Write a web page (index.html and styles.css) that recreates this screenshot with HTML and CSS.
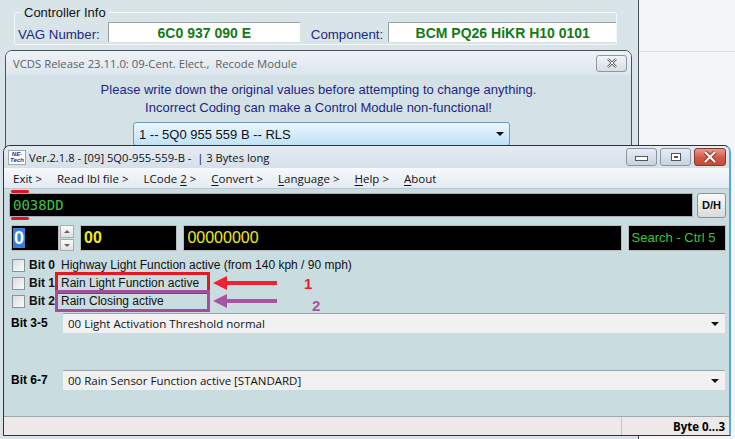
FILE: index.html
```html
<!DOCTYPE html>
<html lang="en">
<head>
    <meta charset="UTF-8">
    <title>VCDS - Recode Module</title>
    <link rel="stylesheet" href="styles.css">
</head>
<body>
    <div class="desk">
        <div class="desk-strip"></div>

        <!-- background VCDS window -->
        <div class="back-win">
            <fieldset class="ctrl-info">
                <legend>Controller Info</legend>
                <div class="ctrl-row">
                    <span class="lbl">VAG Number:</span>
                    <span class="val vag">6C0 937 090 E</span>
                    <span class="lbl comp-lbl">Component:</span>
                    <span class="val comp">BCM PQ26 HiKR H10 0101</span>
                </div>
            </fieldset>
        </div>

        <!-- recode dialog -->
        <div class="dialog">
            <div class="dlg-title">
                <span>VCDS Release 23.11.0: 09-Cent. Elect.,&nbsp; Recode Module</span>
                <span class="dlg-close">
                    <svg width="16" height="10" viewBox="0 0 16 10"><path d="M4 1 L12 9 M12 1 L4 9" stroke="#555" stroke-width="2.4"/><path d="M4 1 L12 9 M12 1 L4 9" stroke="#fff" stroke-width="1"/></svg>
                </span>
            </div>
            <div class="dlg-body">
                <p>Please write down the original values before attempting to change anything.</p>
                <p>Incorrect Coding can make a Control Module non-functional!</p>
                <div class="dlg-select">
                    <span>1 -- 5Q0 955 559 B -- RLS</span>
                    <span class="caret"></span>
                </div>
            </div>
        </div>

        <!-- NE-Tech coding helper -->
        <div class="netech">
            <div class="nt-title">
                <span class="logo"><i>NE-</i><i>Tech</i></span>
                <span class="nt-caption">Ver.2.1.8 - [09] 5Q0-955-559-B -&nbsp; | 3 Bytes long</span>
                <span class="win-btns">
                    <span class="wbtn"><b class="ico-min"></b></span>
                    <span class="wbtn"><b class="ico-max"></b></span>
                    <span class="wbtn close">
                        <svg width="16" height="12" viewBox="0 0 16 12"><path d="M3 1 L13 11 M13 1 L3 11" stroke="#8a3326" stroke-width="4"/><path d="M3 1 L13 11 M13 1 L3 11" stroke="#fff" stroke-width="2.2"/></svg>
                    </span>
                </span>
            </div>
            <div class="nt-menu">
                <span>Exit &gt;</span>
                <span>Read lbl file &gt;</span>
                <span>LCode <u>2</u> &gt;</span>
                <span><u>C</u>onvert &gt;</span>
                <span><u>L</u>anguage &gt;</span>
                <span><u>H</u>elp &gt;</span>
                <span><u>A</u>bout</span>
            </div>

            <div class="nt-body">
                <div class="code-row">
                    <div class="code-field">0038DD<span class="mark top"></span><span class="mark bottom"></span></div>
                    <div class="dh-btn">D/H</div>
                </div>

                <div class="byte-row">
                    <div class="spin">
                        <span class="spin-val"><span class="sel">0</span></span>
                        <span class="spin-btns"><b class="up"></b><b class="down"></b></span>
                    </div>
                    <div class="blk hex">00</div>
                    <div class="blk bin">00000000</div>
                    <div class="blk search">Search - Ctrl 5</div>
                </div>

                <div class="bits">
                    <div class="bit">
                        <span class="chk"></span><b>Bit 0</b>
                        <span class="txt">Highway Light Function active (from 140 kph / 90 mph)</span>
                    </div>
                    <div class="bit">
                        <span class="chk"></span><b>Bit 1</b>
                        <span class="txt boxed red">Rain Light Function active</span>
                        <span class="arrow red"></span>
                        <span class="num red">1</span>
                    </div>
                    <div class="bit">
                        <span class="chk"></span><b>Bit 2</b>
                        <span class="txt boxed purple">Rain Closing active</span>
                        <span class="arrow purple"></span>
                        <span class="num purple">2</span>
                    </div>
                </div>

                <div class="combo-row">
                    <b>Bit 3-5</b>
                    <div class="combo"><span>00 Light Activation Threshold normal</span><span class="caret"></span></div>
                </div>
                <div class="combo-row second">
                    <b>Bit 6-7</b>
                    <div class="combo"><span>00 Rain Sensor Function active [STANDARD]</span><span class="caret"></span></div>
                </div>
            </div>

            <div class="status">
                <span class="st-main"></span>
                <span class="st-byte">Byte 0...3</span>
            </div>
        </div>
    </div>
</body>
</html>
```

FILE: styles.css
```css
body {
    margin: 0;
    width: 735px;
    height: 439px;
    overflow: hidden;
    font-family: 'Liberation Sans', Arial, sans-serif;
    background: #f3f5f7;
}
.desk {
    position: relative;
    width: 735px;
    height: 439px;
}
.desk-strip {
    position: absolute;
    left: 638px;
    top: 51px;
    width: 97px;
    border-top: 1px solid #d6dde2;
}

/* ---- background window ---- */
.back-win {
    position: absolute;
    left: 0;
    top: 0;
    width: 638px;
    height: 439px;
    background: #d9e4e9;
    border-right: 1px solid #4a4f55;
}
.ctrl-info {
    margin: 5px 0 0 14px;
    width: 602px;
    height: 40px;
    padding: 3px 0 0 3px;
    border: 1px solid #f4f7f8;
    border-radius: 2px;
    box-sizing: border-box;
}
.ctrl-info legend {
    font-size: 13px;
    color: #111;
    padding: 0 3px;
    margin-left: 3px;
}
.ctrl-row {
    display: flex;
    align-items: center;
    margin-top: -1px;
    white-space: nowrap;
}
.lbl {
    flex-shrink: 0;
    font-size: 13.3px;
    padding-top: 5px;
    color: #1b2a80;
}
.comp-lbl {
    margin-left: 11px;
}
.val {
    flex-shrink: 0;
    height: 19px;
    line-height: 20px;
    background: #fff;
    border-top: 1px solid #9aa3a8;
    border-left: 1px solid #9aa3a8;
    color: #137a13;
    font-weight: bold;
    font-size: 14px;
    text-align: center;
}
.vag {
    width: 191px;
    margin-left: 8px;
}
.comp {
    width: 227px;
    margin-left: 5px;
}

/* ---- recode dialog ---- */
.dialog {
    position: absolute;
    left: 5px;
    top: 50px;
    width: 625px;
    height: 110px;
    border: 1px solid #4b5158;
    border-radius: 7px 7px 0 0;
    background: #d4e1e6;
    overflow: hidden;
}
.dlg-title {
    height: 24px;
    display: flex;
    align-items: center;
    justify-content: space-between;
    padding: 0 4px 0 7px;
    font-family: 'Open Sans', sans-serif;
    font-size: 11.3px;
    color: #5c6166;
    background: linear-gradient(#eef2f6, #dde6ee);
}
.dlg-close {
    width: 29px;
    height: 15px;
    border: 1px solid #8e979f;
    border-radius: 3px;
    background: linear-gradient(#f1f4f7, #d5dde5);
    display: flex;
    align-items: center;
    justify-content: center;
}
.dlg-body {
    text-align: center;
    color: #1f1f88;
    font-size: 13px;
    padding-top: 7px;
}
.dlg-body p {
    margin: 0 0 2px;
    line-height: 16px;
}
.dlg-select {
    display: flex;
    justify-content: space-between;
    align-items: center;
    width: 365px;
    height: 22px;
    margin: 6px 0 0 127px;
    padding: 0 5px;
    border: 1px solid #6d9ab8;
    border-radius: 3px;
    background: linear-gradient(#eaf6fd, #bfe2f7);
    color: #111;
    font-size: 13px;
    text-align: left;
}
.caret {
    width: 0;
    height: 0;
    border-left: 4px solid transparent;
    border-right: 4px solid transparent;
    border-top: 4px solid #111;
}

/* ---- NE-Tech window ---- */
.netech {
    position: absolute;
    left: 3px;
    top: 145px;
    width: 725px;
    height: 289px;
    border: 1px solid #2f3338;
    border-right: 2px solid #58a8d4;
    border-radius: 7px 7px 0 0;
    background: #c9dde1;
    overflow: hidden;
}
.nt-title {
    height: 22px;
    display: flex;
    align-items: center;
    padding-left: 4px;
    background: linear-gradient(#e4ebf2, #d6e0ea);
}
.logo {
    width: 16px;
    height: 13px;
    background: #fff;
    border: 1px solid #9aa;
    display: flex;
    flex-direction: column;
    align-items: center;
    justify-content: center;
    font-family: 'Liberation Sans', sans-serif;
    font-size: 6px;
    line-height: 6px;
    font-weight: bold;
    color: #1c2aa0;
}
.nt-caption {
    margin-left: 3px;
    font-family: 'Open Sans', sans-serif;
    font-size: 11.2px;
    color: #111;
}
.win-btns {
    display: flex;
    margin-left: auto;
    margin-right: 3px;
    gap: 3px;
}
.wbtn {
    width: 29px;
    height: 16px;
    border: 1px solid #8c96a2;
    border-radius: 3px;
    background: linear-gradient(#e8eef5, #c5d2e0);
    display: flex;
    align-items: center;
    justify-content: center;
}
.wbtn.close {
    width: 30px;
    border-color: #7c3a30;
    background: linear-gradient(#e89a88, #d05a44 55%, #c44c38);
}
.ico-min {
    width: 11px;
    height: 3px;
    border: 1px solid #555;
    background: #fff;
    margin-top: 3px;
}
.ico-max {
    width: 8px;
    height: 6px;
    border: 1px solid #555;
    background: #fff;
    box-shadow: inset 0 0 0 2px #fff, inset 0 0 0 3px #555;
}
.nt-menu {
    height: 20px;
    display: flex;
    align-items: center;
    padding-left: 9px;
    font-family: 'Open Sans', sans-serif;
    font-size: 11.5px;
    color: #111;
    background: linear-gradient(#f7f9fb, #e3eaf2);
    border-bottom: 1px solid #b9c4cc;
}
.nt-menu span {
    margin-right: 15px;
}
.nt-menu u {
    text-decoration-thickness: 1px;
    text-underline-offset: 2px;
}

.nt-body {
    padding: 4px 3px 0 5px;
    height: 223px;
}
.code-row {
    display: flex;
    gap: 4px;
}
.code-field {
    position: relative;
    flex: 1;
    height: 22px;
    line-height: 22px;
    background: #000;
    border: 1px solid #aab;
    color: #3fc43f;
    font-family: 'DejaVu Sans Mono', monospace;
    font-size: 14px;
    padding-left: 3px;
}
.mark {
    position: absolute;
    left: 1px;
    width: 18px;
    height: 3px;
    border-radius: 2px;
    background: #e0141c;
}
.mark.top { top: -4px; }
.mark.bottom { bottom: -4px; }
.dh-btn {
    width: 27px;
    height: 23px;
    line-height: 23px;
    text-align: center;
    font-size: 11px;
    font-weight: bold;
    color: #111;
    border: 1px solid #8a9298;
    border-radius: 3px;
    background: linear-gradient(#fafafa, #dadada);
}

.byte-row {
    display: flex;
    gap: 6px;
    margin-top: 7px;
    height: 26px;
}
.spin {
    display: flex;
    gap: 1px;
    margin-left: 2px;
}
.spin-val {
    width: 45px;
    background: #000;
    border: 1px solid #bbb;
    padding: 2px 0 0 1px;
}
.sel {
    display: inline-block;
    width: 12px;
    height: 20px;
    line-height: 20px;
    background: #3b7fd4;
    color: #fff;
    font-weight: bold;
    font-size: 18px;
    text-align: center;
}
.spin-btns {
    display: flex;
    flex-direction: column;
    gap: 1px;
    width: 14px;
}
.spin-btns b {
    flex: 1;
    border: 1px solid #a6acb2;
    background: linear-gradient(#fafafa, #e2e2e2);
    position: relative;
}
.spin-btns b::after {
    content: '';
    position: absolute;
    left: 3px;
    top: 4px;
    border-left: 3px solid transparent;
    border-right: 3px solid transparent;
}
.spin-btns .up::after { border-bottom: 3px solid #666; }
.spin-btns .down::after { border-top: 3px solid #666; }
.blk {
    background: #000;
    border: 1px solid #bbb;
    color: #ecec1e;
    font-size: 16px;
    line-height: 24px;
    padding-left: 3px;
}
.hex {
    width: 93px;
    font-weight: bold;
}
.bin {
    width: 436px;
}
.search {
    width: 94px;
    color: #36c836;
    font-size: 13px;
}

.bits {
    margin-top: 5px;
    font-size: 12px;
    color: #111;
}
.bit {
    display: flex;
    align-items: center;
    height: 18px;
    padding-left: 3px;
}
.chk {
    width: 11px;
    height: 11px;
    border: 1px solid #8d9499;
    background: linear-gradient(135deg, #dcdcdc, #fafafa);
    margin-right: 4px;
}
.bit b {
    width: 26px;
}
.txt {
    margin-left: 3px;
    padding-left: 3px;
    width: 146px;
    white-space: nowrap;
}
.boxed {
    height: 16px;
    line-height: 16px;
    outline: 3px solid;
}
.boxed.red { outline-color: #e21a23; }
.boxed.purple { outline-color: #a54c9b; }
.arrow {
    position: relative;
    width: 50px;
    height: 4px;
    margin-left: 20px;
}
.arrow.red { background: #ee2233; }
.arrow.purple { background: #a9559f; }
.arrow::before {
    content: '';
    position: absolute;
    left: -14px;
    top: -5px;
    border-top: 7px solid transparent;
    border-bottom: 7px solid transparent;
    border-right: 14px solid;
}
.arrow.red::before { border-right-color: #ee2233; }
.arrow.purple::before { border-right-color: #a9559f; }
.num {
    margin-left: 27px;
    font-size: 15px;
    font-weight: bold;
}
.num.red { color: #e8202c; }
.num.purple { color: #a9559f; position: relative; top: 4px; margin-left: 35px; }

.combo-row {
    display: flex;
    align-items: center;
    margin-top: 3px;
    font-size: 12px;
}
.combo-row.second {
    margin-top: 37px;
}
.combo-row b {
    width: 52px;
    padding-left: 2px;
}
.combo {
    flex: 1;
    height: 19px;
    display: flex;
    align-items: center;
    justify-content: space-between;
    padding: 0 6px 0 5px;
    margin-right: 1px;
    background: #f1f1f1;
    border-top: 1px solid #9aa4aa;
    font-family: 'Open Sans', sans-serif;
    font-size: 11.5px;
    color: #111;
}

.status {
    display: flex;
    height: 20px;
    background: #ede9e9;
    border-top: 1px solid #9ea7ac;
    font-size: 12px;
}
.st-main {
    width: 617px;
    border-right: 1px solid #c8c4c4;
}
.st-byte {
    flex: 1;
    text-align: right;
    padding-right: 4px;
    line-height: 20px;
    font-weight: bold;
    font-family: 'Open Sans', sans-serif;
    font-size: 11.5px;
}
```
